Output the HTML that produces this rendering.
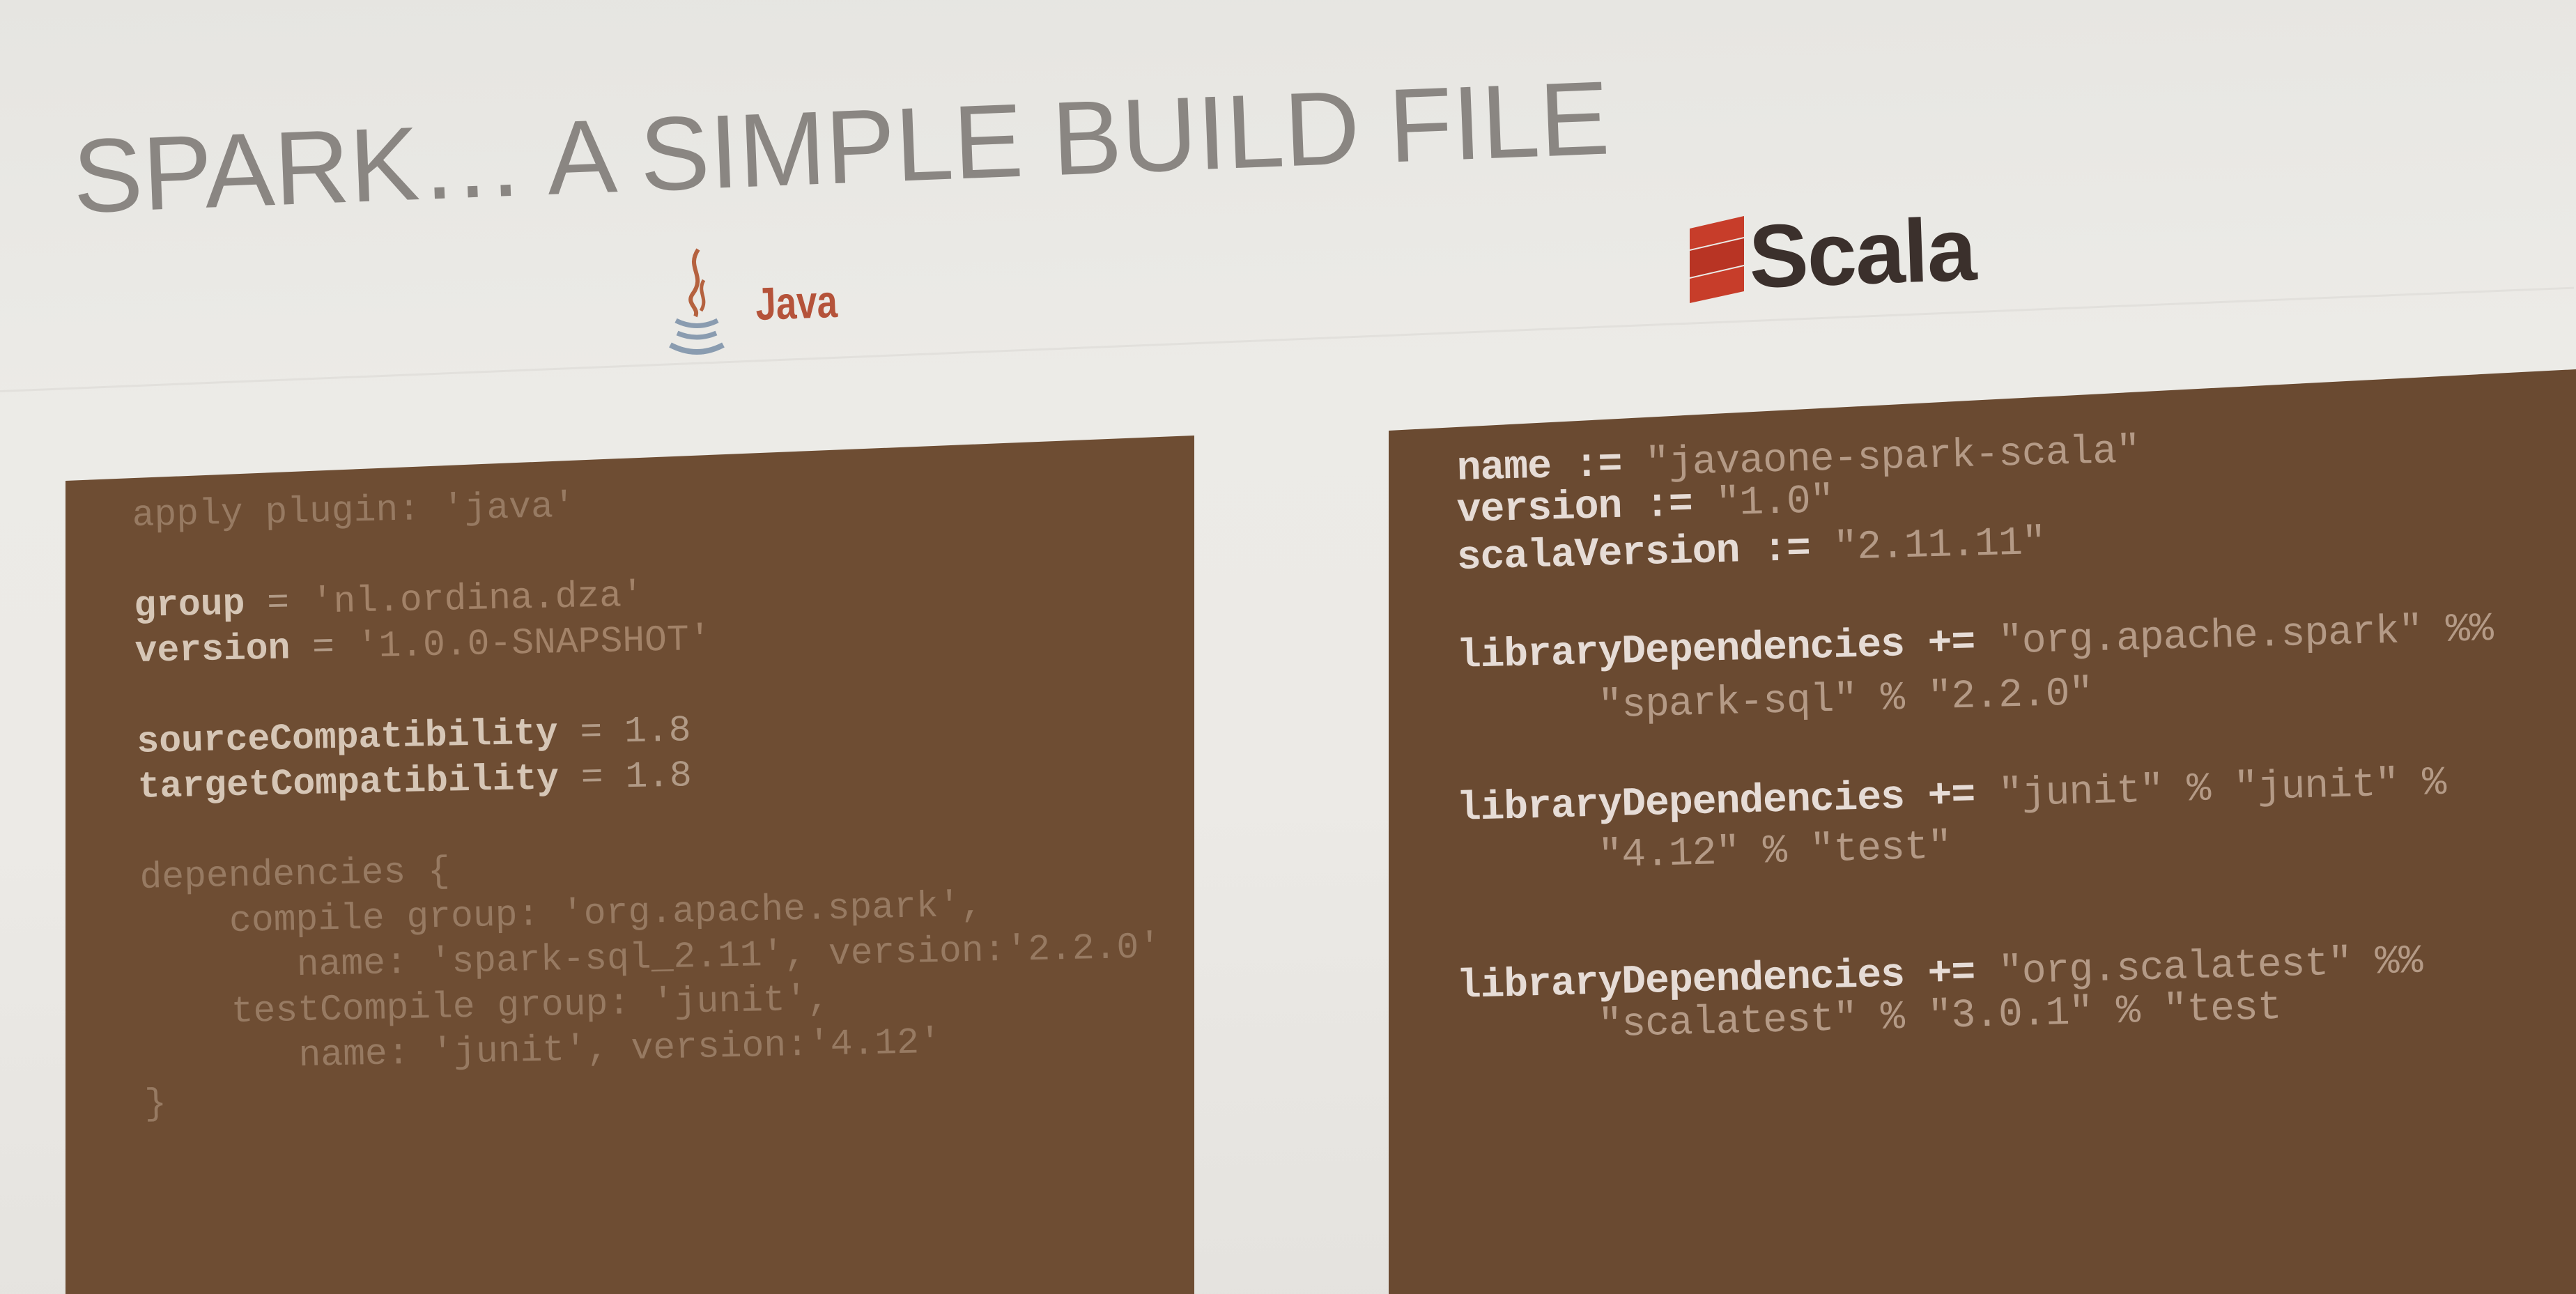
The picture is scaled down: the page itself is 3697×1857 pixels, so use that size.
<!DOCTYPE html>
<html><head><meta charset="utf-8"><style>
html,body{margin:0;padding:0}
body{width:3697px;height:1857px;position:relative;overflow:hidden;
background:linear-gradient(178deg,#e6e5e1 0%,#ecebe7 30%,#eceae6 60%,#e4e2de 100%);
font-family:"Liberation Sans",sans-serif}
.abs{position:absolute}
.title{left:108px;top:167px;font-size:150px;color:#8a8682;font-weight:normal;letter-spacing:0px;
transform:rotate(-2.2deg);transform-origin:left bottom;white-space:nowrap}
.boxL{left:94px;top:600px;width:1620px;height:1257px;background:#6e4d33;
clip-path:polygon(0 90px,100% 25px,100% 100%,0 100%)}
.boxR{left:1993px;top:530px;width:1704px;height:1327px;background:#6a4a31;
clip-path:polygon(0 88px,100% 0,100% 100%,0 100%)}
.code{font-family:"Liberation Mono",monospace;white-space:pre;transform-origin:left top}
.codeL{left:189px;top:708px;font-size:53px;line-height:65px;color:#b19a86;transform:rotate(-1.2deg)}
.codeL .k{color:#d6c6b6;font-weight:bold}
.codeL .s{color:#a28268}
.codeL .d{color:#977a62}
.codeR{left:2090px;top:0;font-size:58px;line-height:64px;color:#e6dcd6;font-weight:bold;letter-spacing:-1px}
.codeR div{position:absolute;left:0;white-space:pre;transform:rotate(-1.5deg);transform-origin:left top}
.codeR .s{color:#b49a86;font-weight:normal}
.scala{left:2510px;top:290px;font-size:128px;font-weight:bold;color:#3b302c;letter-spacing:-2px;transform:rotate(-2deg)}
.java{left:1083px;top:398px;font-size:66px;font-weight:bold;color:#b5533a;transform:rotate(-2deg) scaleX(0.8);transform-origin:left top}
</style></head><body>
<div class="abs" style="left:0;top:560px;width:3697px;height:3px;background:#e2e0dc;transform:rotate(-2.3deg);transform-origin:left top"></div>
<div class="abs title">SPARK… A SIMPLE BUILD FILE</div>

<svg class="abs" style="left:950px;top:350px" width="100" height="170" viewBox="0 0 100 170">
<path d="M52 8 C34 35 64 45 44 72 C34 86 54 92 48 104" stroke="#b5623f" stroke-width="6" fill="none"/>
<path d="M60 52 C50 70 67 78 56 96" stroke="#b5623f" stroke-width="5" fill="none"/>
<path d="M20 110 Q50 125 80 110" stroke="#8a9cb0" stroke-width="7" fill="none"/>
<path d="M22 128 Q50 140 78 128" stroke="#8a9cb0" stroke-width="7" fill="none"/>
<path d="M12 145 Q50 165 88 145" stroke="#8a9cb0" stroke-width="8" fill="none"/>
</svg>
<div class="abs java">Java</div>

<svg class="abs" style="left:2423px;top:310px" width="82" height="125" viewBox="0 0 82 125">
<polygon points="2,18 80,0 80,30 2,48" fill="#c73d2a"/>
<polygon points="2,50 80,32 80,70 2,88" fill="#b83424"/>
<polygon points="2,90 80,72 80,108 2,125" fill="#c73d2a"/>
</svg>
<div class="abs scala">Scala</div>

<div class="abs boxL"></div>
<div class="abs boxR"></div>

<div class="abs code codeL"><span class="d">apply plugin: 'java'</span>

<span class="k">group</span> = <span class="s">'nl.ordina.dza'</span>
<span class="k">version</span> = <span class="s">'1.0.0-SNAPSHOT'</span>

<span class="k">sourceCompatibility</span> = 1.8
<span class="k">targetCompatibility</span> = 1.8

<span class="d">dependencies {</span>
<span class="d">    compile group: 'org.apache.spark',</span>
<span class="d">       name: 'spark-sql_2.11', version:'2.2.0'</span>
<span class="d">    testCompile group: 'junit',</span>
<span class="d">       name: 'junit', version:'4.12'</span>
<span class="d">}</span></div>

<div class="abs code codeR">
<div style="top:642px">name := <span class="s">"javaone-spark-scala"</span></div>
<div style="top:702px">version := <span class="s">"1.0"</span></div>
<div style="top:770px">scalaVersion := <span class="s">"2.11.11"</span></div>
<div style="top:911px">libraryDependencies += <span class="s">"org.apache.spark" %%</span></div>
<div style="top:988px">      <span class="s">"spark-sql" % "2.2.0"</span></div>
<div style="top:1130px">libraryDependencies += <span class="s">"junit" % "junit" %</span></div>
<div style="top:1203px">      <span class="s">"4.12" % "test"</span></div>
<div style="top:1385px">libraryDependencies += <span class="s">"org.scalatest" %%</span></div>
<div style="top:1446px">      <span class="s">"scalatest" % "3.0.1" % "test</span></div>
</div>
</body></html>
